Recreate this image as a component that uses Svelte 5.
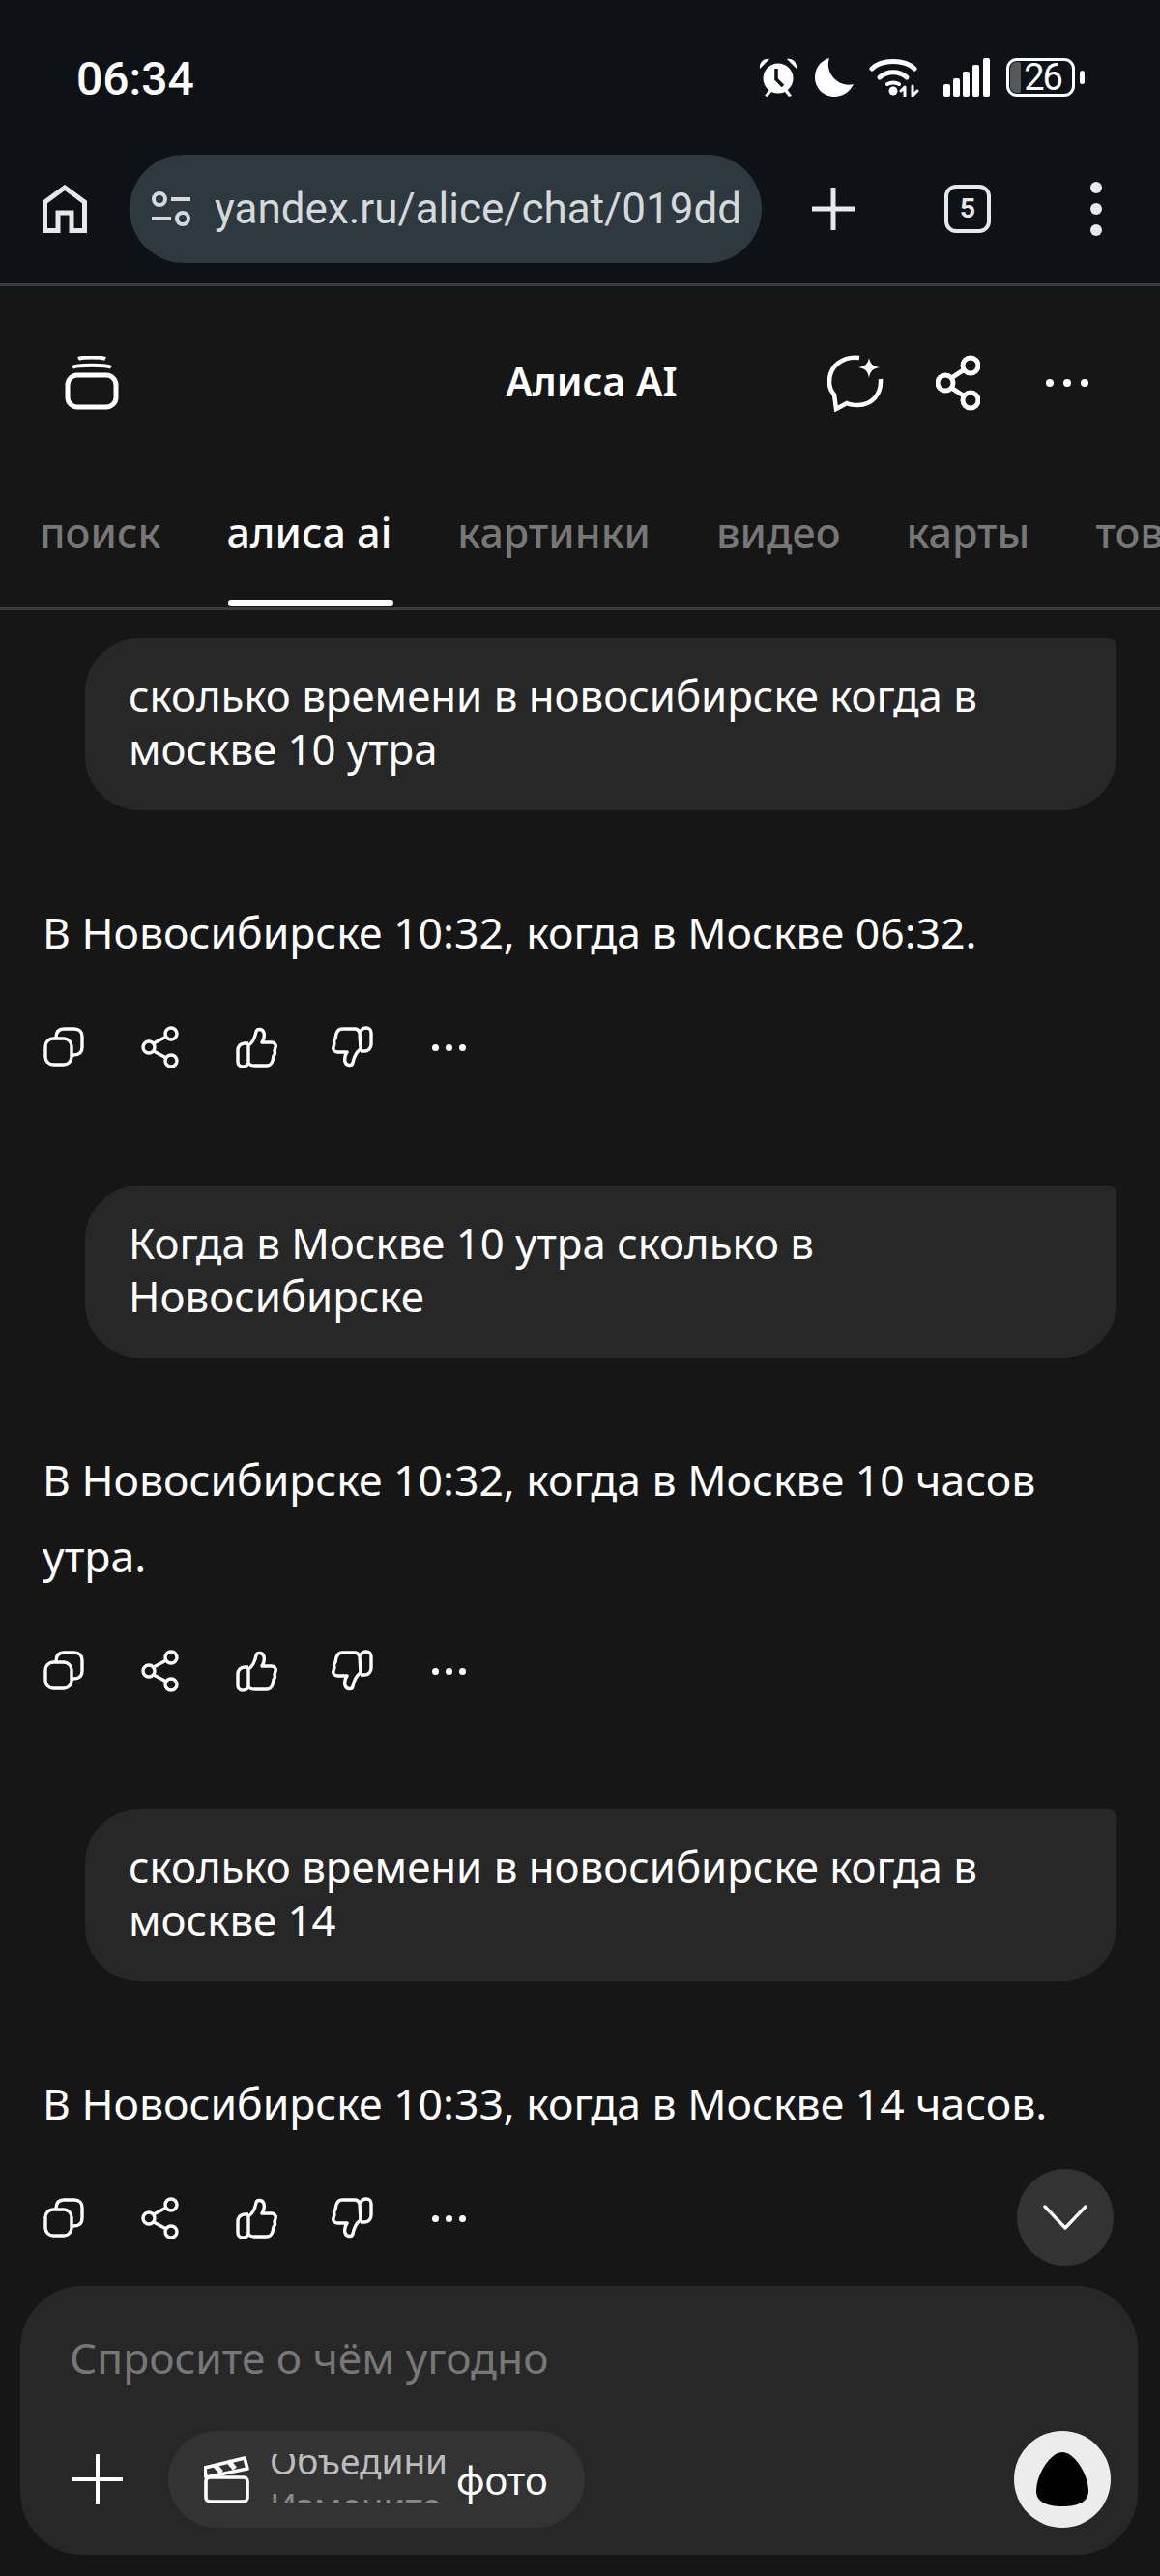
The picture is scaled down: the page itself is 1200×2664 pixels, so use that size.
<script>
  const tabs = ['поиск', 'алиса ai', 'картинки', 'видео', 'карты', 'товары'];
  const thread = [
    { q: ['сколько времени в новосибирске когда в', 'москве 10 утра'], a: ['В Новосибирске 10:32, когда в Москве 06:32.'] },
    { q: ['Когда в Москве 10 утра сколько в', 'Новосибирске'], a: ['В Новосибирске 10:32, когда в Москве 10 часов', 'утра.'] },
    { q: ['сколько времени в новосибирске когда в', 'москве 14'], a: ['В Новосибирске 10:33, когда в Москве 14 часов.'] }
  ];
</script>

<div class="page">
  <div class="chrome">
    <div class="status">
      <span class="time">06:34</span>
      <div class="sys">
        <svg width="40" height="40" viewBox="0 0 40 40" fill="#fff"><circle cx="20" cy="21" r="15.5"/><path d="M1 11C0 5 5 0 11 1zM39 11C40 5 35 0 29 1z"/><path d="M6 39l5-7 3 2-5 6zM34 39l-5-7-3 2 5 6z"/><path d="M18 11v11l7 7" fill="none" stroke="#0e1116" stroke-width="3.5"/></svg>
        <svg class="moon" width="40" height="40" viewBox="0 0 40 40"><path d="M15 0C5 3 0 11 0 20c0 11 9 20 20 20 9 0 16-5 20-13-3 1-7 1-10 0C18 24 11 11 15 0z" fill="#fff"/></svg>
        <svg class="wifi" width="52" height="40" viewBox="0 0 52 40" fill="none" stroke="#fff" stroke-width="5" stroke-linecap="round"><path d="M3 11C13 1 37 1 47 11"/><path d="M11 20c8-7 20-7 28 0"/><path d="M19 27c4-2 8-2 12 0" stroke-width="4"/><circle cx="25" cy="34" r="4.5" fill="#fff" stroke="none"/><path d="M37 39V30M33 34l4-4M45 29v10M45 39l5-5" stroke-width="3"/></svg>
        <svg class="bars" width="48" height="40" viewBox="0 0 48 40" fill="#fff"><rect x="0" y="27" width="7" height="13" rx="2"/><rect x="10" y="21" width="7" height="19" rx="2"/><rect x="20" y="14" width="7" height="26" rx="2"/><rect x="30" y="7" width="7" height="33" rx="2"/><rect x="41" y="0" width="7" height="40" rx="2"/></svg>
        <div class="battery">
          <div class="cell"><span class="fill"></span><span class="level">26</span></div>
          <span class="nub"></span>
        </div>
      </div>
    </div>
    <div class="toolbar">
      <svg class="home" width="46" height="50" viewBox="0 0 46 50" fill="none" stroke="#e6e8ea" stroke-width="5"><path d="M2.500 47.500V18L23 3l20.500 15v29.500H30V29H16v18.500z"/></svg>
      <div class="url">
        <svg width="40" height="36" viewBox="0 0 40 36" fill="none" stroke="#d4d9dc" stroke-width="4"><circle cx="8" cy="8" r="6"/><path d="M20 8h20M0 28h20"/><circle cx="32" cy="28" r="6"/></svg>
        <span class="urltext">yandex.ru/alice/chat/019dd</span>
      </div>
      <svg class="plus" width="44" height="44" viewBox="0 0 44 44" stroke="#e6e8ea" stroke-width="5"><path d="M22 0v44M0 22h44"/></svg>
      <div class="tabcount">5</div>
      <div class="kebab"><span></span><span></span><span></span></div>
    </div>
  </div>

  <header class="head">
    <svg class="stack" width="56" height="56" viewBox="0 0 56 56" fill="none" stroke="#fff" stroke-width="5"><rect x="3" y="20" width="50" height="33" rx="10"/><path d="M8 12c4-3 36-3 40 0M14 3c4-2 24-2 28 0" stroke-width="4"/></svg>
    <div class="title">Алиса AI</div>
    <div class="head-actions">
      <svg width="58" height="60" viewBox="0 0 58 60" fill="none" stroke="#fff" stroke-width="4.500"><path d="M33 4C16 2 2 12 2 29c0 5 2 10 5 13l2 15 11-6c4 2 7 2 11 2 15 0 25-11 24-27"/><path d="M43 4c1 6 4 9 11 10-7 1-10 4-11 11-1-7-4-10-11-11 7-1 10-4 11-10z" fill="#fff" stroke="none"/></svg>
      <svg class="share" width="46" height="58" viewBox="0 0 46 58" fill="none" stroke="#fff" stroke-width="5"><circle cx="36" cy="11" r="8"/><circle cx="10" cy="29" r="8"/><circle cx="36" cy="47" r="8"/><path d="M16 24l14-9M16 34l14 9"/></svg>
      <div class="dots"><span></span><span></span><span></span></div>
    </div>
  </header>

  <nav class="tabs">
    {#each tabs as t}
      <span class="tab" class:active={t === 'алиса ai'}>{t}</span>
    {/each}
  </nav>

  <main class="chat">
    {#each thread as m}
      <section class="turn">
        <div class="bubble">
          {#each m.q as l}<div>{l}</div>{/each}
        </div>
        <div class="answer">
          {#each m.a as l}<div>{l}</div>{/each}
        </div>
        <div class="actions">
          <svg width="44" height="44" viewBox="0 0 44 44" fill="none" stroke="#fff" stroke-width="3.400"><rect x="3" y="13" width="27" height="27" rx="8"/><path d="M14 13v-1c0-6 3-9 8-9h11c5 0 8 3 8 8v11c0 5-3 8-9 8h-2"/></svg>
          <svg width="44" height="44" viewBox="0 0 44 44" fill="none" stroke="#fff" stroke-width="3.400"><circle cx="33" cy="8" r="6"/><circle cx="10" cy="22" r="6"/><circle cx="33" cy="36" r="6"/><path d="M15 18l13-7M15 26l13 7"/></svg>
          <svg width="44" height="44" viewBox="0 0 44 44" fill="none" stroke="#fff" stroke-width="3.400" stroke-linejoin="round"><path d="M14 20c5-3 7-9 8-14 1-4 7-3 8 1 1 4 0 7-2 10h10c3 0 5 3 4 5l-1 4c1 2 0 4-1 5l-1 5c-1 3-3 5-6 5H20c-3 0-6-1-6-4zM14 38c-1 3-3 4-6 4-3 0-5-2-5-5V25c0-4 3-7 7-7h4"/></svg>
          <svg width="44" height="44" viewBox="0 0 44 44" fill="none" stroke="#fff" stroke-width="3.400" stroke-linejoin="round"><path d="M30 24c-5 3-7 9-8 14-1 4-7 3-8-1-1-4 0-7 2-10H6c-3 0-5-3-4-5l1-4c-1-2 0-4 1-5l1-5c1-3 3-5 6-5h13c3 0 4 1 5 4zM30 6c1-3 3-4 6-4 3 0 5 2 5 5v12c0 4-3 7-7 7h-4"/></svg>
          <div class="dots small"><span></span><span></span><span></span></div>
        </div>
      </section>
    {/each}
    <button class="down" aria-label="Вниз">
      <svg width="46" height="26" viewBox="0 0 46 26" fill="none" stroke="#fff" stroke-width="3.400" stroke-linecap="round" stroke-linejoin="round"><path d="M2 2l21 22L44 2"/></svg>
    </button>
  </main>

  <footer class="composer">
    <div class="placeholder">Спросите о чём угодно</div>
    <div class="controls">
      <svg class="add" width="52" height="52" viewBox="0 0 52 52" stroke="#fff" stroke-width="4"><path d="M26 0v52M0 26h52"/></svg>
      <div class="chip">
        <svg width="47" height="49" viewBox="0 0 47 49" fill="none" stroke="#fff" stroke-width="3.600" stroke-linejoin="round"><rect x="2" y="22" width="43" height="25" rx="4"/><path d="M1 12l41-10 3 11-43 9z"/><path d="M11 9l7 8M25 5l7 8" stroke-width="5"/></svg>
        <div class="marquee">
          <div class="m1">Объедините</div>
          <div class="m2">Измените</div>
        </div>
        <span class="chiptext">фото</span>
      </div>
      <div class="send">
        <svg width="56" height="56" viewBox="0 0 56 56"><path d="M28 0C15 0 1 24 1 40c0 11 10 16 27 16s27-5 27-16C55 24 41 0 28 0z" fill="#000"/></svg>
      </div>
    </div>
  </footer>
</div>

<style>
  :global(body) { margin: 0; background: #161616; }
  .page { width: 1200px; height: 2664px; overflow: hidden; position: relative; background: #161616; color: #fff; font-family: "Noto Sans", Roboto, sans-serif; }
  .chrome { height: 293px; background: #0e1116; border-bottom: 3px solid #3a3c3e; }
  .status { height: 160px; display: flex; justify-content: space-between; padding: 54px 78px 0 79px; box-sizing: border-box; }
  .time { font: 500 48px/56px Roboto, sans-serif; }
  .sys { display: flex; align-items: flex-start; padding-top: 6px; height: 50px; }
  .moon { margin-left: 18px; }
  .wifi { margin-left: 16px; }
  .bars { margin-left: 25px; }
  .battery { display: flex; align-items: center; gap: 5px; height: 40px; margin-left: 17px; }
  .cell { position: relative; width: 71px; height: 40px; box-sizing: border-box; border: 3px solid #fff; border-radius: 11px; display: flex; align-items: center; justify-content: center; }
  .fill { position: absolute; left: 1px; top: 1px; bottom: 1px; width: 11px; background: #55575a; border-radius: 7px 2px 2px 7px; }
  .level { position: relative; font: 400 38px/34px Roboto, sans-serif; letter-spacing: -2px; margin-left: 4px; }
  .nub { width: 5px; height: 14px; background: #fff; border-radius: 3px; }
  .toolbar { height: 112px; display: flex; align-items: center; padding-left: 44px; }
  .url { width: 654px; height: 112px; margin-left: 44px; box-sizing: border-box; background: #2e383f; border-radius: 56px; display: flex; align-items: center; padding-left: 23px; gap: 25px; }
  .urltext { font: 400 44px/56px Roboto, sans-serif; color: #d4d9dc; white-space: nowrap; }
  .plus { margin-left: 52px; }
  .tabcount { margin-left: 93px; width: 48px; height: 50px; box-sizing: border-box; border: 4px solid #e6e8ea; border-radius: 12px; display: flex; align-items: center; justify-content: center; font: 700 28px/1 Roboto, sans-serif; color: #e6e8ea; }
  .kebab { margin-left: 103px; display: flex; flex-direction: column; gap: 10px; }
  .kebab span { width: 12px; height: 12px; border-radius: 50%; background: #e6e8ea; }
  .head { height: 150px; display: grid; grid-template-columns: 1fr auto 1fr; align-items: center; padding: 50px 43px 0 67px; box-sizing: border-box; }
  .title { font: 600 41px/56px "Noto Sans", sans-serif; margin-bottom: 5px; }
  .head-actions { justify-self: end; display: flex; align-items: center; padding-right: 31px; }
  .share { margin-left: 54px; }
  .head-actions > .dots { margin-left: 68px; }
  .dots { display: flex; gap: 10px; }
  .dots span { width: 8px; height: 8px; border-radius: 50%; background: #fff; }
  .dots.small { gap: 7px; width: 44px; justify-content: center; }
  .dots.small span { width: 7px; height: 7px; }
  .tabs { height: 185px; display: flex; gap: 68px; padding: 83px 0 0 41px; box-sizing: border-box; border-bottom: 3px solid #3a3c3e; white-space: nowrap; overflow: hidden; font: 500 43px/44px "Noto Sans", sans-serif; color: #777; align-items: flex-start; }
  .tab { position: relative; }
  .tab.active { color: #fff; }
  .tab.active::after { content: ""; position: absolute; left: 2px; right: -2px; top: 92px; height: 6px; border-radius: 3px; background: #fff; }
  .chat { padding: 29px 44px 0; position: relative; }
  .turn { margin-bottom: 121px; }
  .bubble { margin-left: 44px; box-sizing: border-box; width: 1067px; padding: 32px 45px 36px; background: #272727; border-radius: 56px 8px 56px 56px; font-size: 43.750px; line-height: 55px; }
  .answer { margin-top: 86px; font-size: 44.500px; line-height: 79px; }
  .actions { margin-top: 58px; display: flex; align-items: center; gap: 55.500px; height: 44px; }
  .down { position: absolute; left: 1052px; top: 1612px; width: 100px; height: 100px; border-radius: 50%; border: 0; background: #333334; padding: 0; display: flex; align-items: center; justify-content: center; }
  .composer { position: absolute; left: 21px; top: 2364px; width: 1156px; height: 278px; box-sizing: border-box; background: #272727; border-radius: 64px; padding: 46px 28px 0 54px; }
  .placeholder { font-size: 44.300px; line-height: 56px; color: #777; margin-left: -3px; }
  .controls { display: flex; align-items: center; margin-top: 48px; height: 100px; }
  .add { flex: none; }
  .chip { margin-left: 47px; width: 431px; height: 100px; border-radius: 50px; background: #333334; display: flex; align-items: center; padding-left: 37px; box-sizing: border-box; }
  .marquee { width: 183px; height: 50px; margin-left: 21px; overflow: hidden; font-size: 37px; color: #bcbcbc; white-space: nowrap; line-height: 46px; flex: none; margin-top: -2px; }
  .m1 { margin-top: -16px; }
  .m2 { color: #888; }
  .chiptext { font-size: 40px; margin-left: 10px; }
  .send { margin-left: auto; width: 100px; height: 100px; border-radius: 50%; background: #ececec; display: flex; align-items: center; justify-content: center; }
</style>
